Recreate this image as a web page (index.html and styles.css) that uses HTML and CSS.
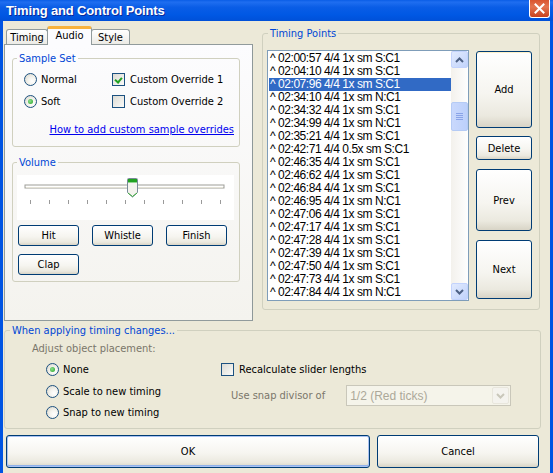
FILE: index.html
```html
<!DOCTYPE html>
<html lang="en">
<head>
    <meta charset="UTF-8">
    <title>Timing and Control Points</title>
    <link rel="stylesheet" href="styles.css">
</head>
<body>
    <div class="titlebar">
        <span class="title">Timing and Control Points</span>
        <span class="close">
            <svg width="11" height="11" viewBox="0 0 11 11"><path d="M1.5 1.5 L9.5 9.5 M9.5 1.5 L1.5 9.5" stroke="#fff" stroke-width="2" stroke-linecap="square"/></svg>
        </span>
    </div>
    <div class="client">
        <div class="top">
            <div class="tabs-col">
                <div class="tabstrip">
                    <div class="tab tab-timing">Timing</div>
                    <div class="tab tab-audio active">Audio</div>
                    <div class="tab tab-style">Style</div>
                </div>
                <div class="tabpanel">
                    <fieldset class="group sample">
                        <legend>Sample Set</legend>
                        <div class="sample-grid">
                            <label class="opt"><span class="radio"></span>Normal</label>
                            <label class="opt"><span class="check checked"></span>Custom Override 1</label>
                            <label class="opt"><span class="radio on"></span>Soft</label>
                            <label class="opt"><span class="check"></span>Custom Override 2</label>
                        </div>
                        <a class="link" href="#">How to add custom sample overrides</a>
                    </fieldset>
                    <fieldset class="group volume">
                        <legend>Volume</legend>
                        <div class="slider">
                            <svg width="217" height="45" viewBox="0 0 217 45">
                                <rect x="8" y="10" width="199" height="3" fill="#fff" stroke="#9d9d97" stroke-width="1"/>
                                <line x1="9" y1="12.5" x2="206" y2="12.5" stroke="#e4e2d6"/>
                                <g stroke="#9a9a9a">
                                    <line x1="13.5" y1="25" x2="13.5" y2="29"/>
                                    <line x1="32.5" y1="25" x2="32.5" y2="29"/>
                                    <line x1="51.5" y1="25" x2="51.5" y2="29"/>
                                    <line x1="70.5" y1="25" x2="70.5" y2="29"/>
                                    <line x1="89.5" y1="25" x2="89.5" y2="29"/>
                                    <line x1="108.5" y1="25" x2="108.5" y2="29"/>
                                    <line x1="127.5" y1="25" x2="127.5" y2="29"/>
                                    <line x1="146.5" y1="25" x2="146.5" y2="29"/>
                                    <line x1="165.5" y1="25" x2="165.5" y2="29"/>
                                    <line x1="184.5" y1="25" x2="184.5" y2="29"/>
                                    <line x1="203.5" y1="25" x2="203.5" y2="29"/>
                                </g>
                                <path d="M110.5 4.5 Q110.5 3.5 111.5 3.5 L119.5 3.5 Q120.5 3.5 120.5 4.5 L120.5 17.5 L115.5 22 L110.5 17.5 Z" fill="#f4f3ee" stroke="#7a8a99"/>
                                <rect x="111" y="4" width="9" height="3" fill="#21a121"/>
                                <line x1="111" y1="7.5" x2="120" y2="7.5" stroke="#8fd48f"/>
                                <path d="M111 18 L115.5 21.5 L120 18" fill="none" stroke="#3cae3c"/>
                            </svg>
                        </div>
                        <div class="vol-buttons">
                            <button class="btn">Hit</button>
                            <button class="btn">Whistle</button>
                            <button class="btn">Finish</button>
                            <button class="btn">Clap</button>
                        </div>
                    </fieldset>
                </div>
            </div>

            <fieldset class="group timing">
                <legend>Timing Points</legend>
                <div class="tp-body">
                    <div class="listbox">
                        <div class="rows">
                            <div class="row">^ 02:00:57 4/4 1x sm S:C1</div>
                            <div class="row">^ 02:04:10 4/4 1x sm S:C1</div>
                            <div class="row selected">^ 02:07:96 4/4 1x sm S:C1</div>
                            <div class="row">^ 02:34:10 4/4 1x sm N:C1</div>
                            <div class="row">^ 02:34:32 4/4 1x sm S:C1</div>
                            <div class="row">^ 02:34:99 4/4 1x sm N:C1</div>
                            <div class="row">^ 02:35:21 4/4 1x sm S:C1</div>
                            <div class="row">^ 02:42:71 4/4 0.5x sm S:C1</div>
                            <div class="row">^ 02:46:35 4/4 1x sm S:C1</div>
                            <div class="row">^ 02:46:62 4/4 1x sm S:C1</div>
                            <div class="row">^ 02:46:84 4/4 1x sm S:C1</div>
                            <div class="row">^ 02:46:95 4/4 1x sm N:C1</div>
                            <div class="row">^ 02:47:06 4/4 1x sm S:C1</div>
                            <div class="row">^ 02:47:17 4/4 1x sm S:C1</div>
                            <div class="row">^ 02:47:28 4/4 1x sm S:C1</div>
                            <div class="row">^ 02:47:39 4/4 1x sm S:C1</div>
                            <div class="row">^ 02:47:50 4/4 1x sm S:C1</div>
                            <div class="row">^ 02:47:73 4/4 1x sm S:C1</div>
                            <div class="row">^ 02:47:84 4/4 1x sm N:C1</div>
                        </div>
                        <div class="scrollbar">
                            <div class="sb-btn">
                                <svg width="9" height="6" viewBox="0 0 9 6"><path d="M1 5 L4.5 1.5 L8 5" fill="none" stroke="#4d6185" stroke-width="2"/></svg>
                            </div>
                            <div class="sb-track">
                                <div class="sb-thumb">
                                    <svg width="7" height="8" viewBox="0 0 7 8"><g stroke="#8aa4e8"><line x1="0" y1="0.5" x2="7" y2="0.5"/><line x1="0" y1="2.5" x2="7" y2="2.5"/><line x1="0" y1="4.5" x2="7" y2="4.5"/><line x1="0" y1="6.5" x2="7" y2="6.5"/></g></svg>
                                </div>
                            </div>
                            <div class="sb-btn">
                                <svg width="9" height="6" viewBox="0 0 9 6"><path d="M1 1 L4.5 4.5 L8 1" fill="none" stroke="#4d6185" stroke-width="2"/></svg>
                            </div>
                        </div>
                    </div>
                    <div class="side-buttons">
                        <button class="btn btn-add">Add</button>
                        <button class="btn btn-delete">Delete</button>
                        <button class="btn btn-prev">Prev</button>
                        <button class="btn btn-next">Next</button>
                    </div>
                </div>
            </fieldset>
        </div>

        <fieldset class="group apply">
            <legend>When applying timing changes...</legend>
            <div class="apply-body">
                <div class="apply-left">
                    <div class="muted adjust">Adjust object placement:</div>
                    <label class="opt row-opt"><span class="radio on"></span>None</label>
                    <label class="opt row-opt"><span class="radio"></span>Scale to new timing</label>
                    <label class="opt row-opt"><span class="radio"></span>Snap to new timing</label>
                </div>
                <div class="apply-right">
                    <label class="opt recalc"><span class="check"></span>Recalculate slider lengths</label>
                    <div class="snap-row">
                        <span class="muted">Use snap divisor of</span>
                        <div class="combo">
                            <span>1/2 (Red ticks)</span>
                            <span class="combo-btn">
                                <svg width="9" height="6" viewBox="0 0 9 6"><path d="M1 1 L4.5 4.5 L8 1" fill="none" stroke="#c9c7ba" stroke-width="2"/></svg>
                            </span>
                        </div>
                    </div>
                </div>
            </div>
        </fieldset>

        <div class="dialog-buttons">
            <button class="btn btn-ok">OK</button>
            <button class="btn btn-cancel">Cancel</button>
        </div>
    </div>
</body>
</html>
```

FILE: styles.css
```css
* {
    box-sizing: border-box;
}
body {
    margin: 0;
    width: 553px;
    height: 473px;
    overflow: hidden;
    background: #ece9d8;
    font-family: "DejaVu Sans Condensed", "DejaVu Sans", sans-serif;
    font-size: 11px;
    color: #000;
}
.titlebar {
    height: 21px;
    display: flex;
    justify-content: space-between;
    align-items: flex-start;
    padding: 0 3px 0 6px;
    background: linear-gradient(to bottom, #0a5de6 0%, #1f6ef0 10%, #0a5de6 35%, #0058e4 70%, #0050d8 100%);
}
.title {
    margin-top: 3px;
    color: #fff;
    font-family: "Liberation Sans", Arial, sans-serif;
    font-weight: bold;
    font-size: 13px;
    letter-spacing: -0.15px;
    text-shadow: 1px 1px #0a2a9a;
}
.close {
    width: 21px;
    height: 18px;
    display: flex;
    align-items: center;
    justify-content: center;
    border: 1px solid #fff;
    border-top: none;
    border-radius: 0 0 3px 3px;
    background: linear-gradient(to bottom, #d9542f, #e47450 40%, #c8421f);
}
.client {
    height: 452px;
    border-left: 3px solid #0054e3;
    border-right: 3px solid #0054e3;
}
.top {
    display: flex;
    align-items: flex-start;
    height: 300px;
}

/* tabs */
.tabs-col {
    margin-left: 1px;
    width: 249px;
}
.tabstrip {
    display: flex;
    align-items: flex-end;
    height: 18px;
    margin-top: 5px;
    padding-left: 2px;
}
.tab {
    height: 15px;
    border: 1px solid #919b9c;
    border-bottom: none;
    border-radius: 3px 3px 0 0;
    background: linear-gradient(#fff, #ecebe6);
    text-align: center;
    line-height: 15px;
}
.tab-timing {
    width: 42px;
    margin-right: -1px;
}
.tab-audio {
    width: 45px;
}
.tab-style {
    width: 39px;
    margin-left: -1px;
}
.tab.active {
    height: 19px;
    margin-bottom: -1px;
    position: relative;
    z-index: 1;
    background: #fcfcfe;
    border-top: 3px solid #f8b33d;
    line-height: 14px;
}
.tabpanel {
    height: 277px;
    border: 1px solid #919b9c;
    border-right-color: #8e9899;
    background: linear-gradient(#fcfcfe, #f4f3ee);
    padding: 7px 0 0 7px;
}

/* group boxes */
.group {
    margin: 0;
    padding: 0;
    min-width: 0;
    border: 1px solid #d0d0bf;
    border-radius: 3px;
}
.group legend {
    margin-left: 4px;
    padding: 0 2px;
    line-height: 13px;
    color: #0046d5;
}
.sample {
    width: 228px;
    height: 95px;
}
.sample-grid {
    display: grid;
    grid-template-columns: 88px auto;
    grid-auto-rows: 22px;
    padding: 3px 0 0 11px;
}
.opt {
    display: flex;
    align-items: center;
    gap: 4px;
}
.check + * {
    margin-left: 1px;
}
.radio {
    width: 13px;
    height: 13px;
    border-radius: 50%;
    border: 1px solid #1c5180;
    background: radial-gradient(circle at 65% 65%, #fff 0%, #f4f3ee 40%, #d6d3c6 100%);
    flex: none;
    display: flex;
    align-items: center;
    justify-content: center;
}
.radio.on::after {
    content: "";
    width: 5px;
    height: 5px;
    border-radius: 50%;
    background: radial-gradient(circle at 40% 40%, #8ee08e, #21a121);
}
.check {
    width: 13px;
    height: 13px;
    border: 1px solid #1c5180;
    background: linear-gradient(135deg, #dcdbd4, #fbfbf9);
    flex: none;
    margin-right: 1px;
}
.check.checked {
    background: linear-gradient(135deg, #dcdbd4, #fbfbf9) ;
    position: relative;
}
.check.checked::after {
    content: "";
    position: absolute;
    left: 2px;
    top: 1px;
    width: 5px;
    height: 3px;
    border-left: 2px solid #21a121;
    border-bottom: 2px solid #21a121;
    transform: translate(0, 2px) rotate(-50deg);
}
.link {
    display: block;
    margin: 11px 5px 0 0;
    text-align: right;
    line-height: 13px;
    color: #0000ee;
    text-decoration: underline;
}
.volume {
    margin-top: 9px;
    width: 228px;
    height: 126px;
}
.slider {
    margin: 6px 0 0 4px;
    width: 217px;
    height: 45px;
    background: #fff;
}
.slider svg {
    display: block;
}
.vol-buttons {
    display: grid;
    grid-template-columns: repeat(3, 61px);
    grid-auto-rows: 21px;
    column-gap: 13px;
    row-gap: 8px;
    margin: 5px 0 0 5px;
}

/* buttons */
.btn {
    font-family: inherit;
    font-size: 11px;
    color: #000;
    padding: 0;
    border: 1px solid #003c74;
    border-radius: 3px;
    background: linear-gradient(to bottom, #ffffff 0%, #f6f5f0 55%, #ebe9df 85%, #d8d4c6 100%);
}

/* timing points */
.timing {
    margin: 6px 0 0 9px;
    width: 278px;
    height: 283px;
}
.timing legend {
    margin-left: 5px;
}
.tp-body {
    display: flex;
    align-items: flex-start;
    gap: 7px;
    padding: 10px 0 0 4px;
}
.listbox {
    display: flex;
    width: 202px;
    height: 251px;
    border: 1px solid #7f9db9;
    background: #fff;
}
.rows {
    flex: 1;
    padding: 1px 0 0 1px;
}
.row {
    height: 13px;
    line-height: 13px;
    padding-left: 1px;
    font-family: "Liberation Sans", Arial, sans-serif;
    font-size: 12px;
    letter-spacing: -0.45px;
    white-space: nowrap;
}
.row.selected {
    background: #316ac5;
    color: #fff;
}
.scrollbar {
    width: 17px;
    display: flex;
    flex-direction: column;
    background: linear-gradient(to right, #f3f1ec, #fefefe);
}
.sb-btn {
    height: 17px;
    display: flex;
    align-items: center;
    justify-content: center;
    border: 1px solid #c3d3fd;
    border-radius: 2px;
    background: linear-gradient(135deg, #e1eafe, #c1d3fb);
}
.sb-track {
    flex: 1;
    padding-top: 34px;
}
.sb-thumb {
    height: 29px;
    display: flex;
    align-items: center;
    justify-content: center;
    border: 1px solid #b5cbf5;
    border-radius: 2px;
    background: linear-gradient(to right, #c9d8fc, #bcd0fb);
}
.side-buttons {
    display: flex;
    flex-direction: column;
    width: 56px;
    margin-top: 1px;
}
.side-buttons .btn {
    width: 56px;
}
.btn-add {
    height: 77px;
    box-shadow: inset 0 1px 0 #fff1c7;
}
.btn-delete {
    height: 24px;
    margin-top: 8px;
}
.btn-prev {
    height: 62px;
    margin-top: 9px;
}
.btn-next {
    height: 59px;
    margin-top: 9px;
}

/* bottom group */
.apply {
    margin: 3px 0 0 1px;
    width: 537px;
    height: 105px;
}
.apply legend {
    margin-left: 5px;
}
.apply-body {
    display: flex;
}
.apply-left {
    width: 216px;
}
.muted {
    color: #7a766a;
}
.adjust {
    margin-top: 5px;
    padding-left: 27px;
    line-height: 13px;
}
.row-opt {
    height: 21.5px;
    padding-left: 41px;
}
.row-opt:first-of-type {
    margin-top: 4px;
}
.apply-left .row-opt:nth-child(2) {
    margin-top: 4px;
}
.apply-right {
    padding-top: 22px;
}
.recalc {
    height: 21px;
}
.snap-row {
    display: flex;
    align-items: center;
    margin-top: 5px;
    padding-left: 10px;
    height: 21px;
}
.combo {
    margin-left: 21px;
    width: 165px;
    height: 21px;
    display: flex;
    align-items: center;
    justify-content: space-between;
    border: 1px solid #c9c7ba;
    background: #f5f4ea;
    color: #aca899;
    font-family: "Liberation Sans", Arial, sans-serif;
    font-size: 12px;
    padding: 0 1px 0 3px;
}
.combo-btn {
    width: 17px;
    height: 17px;
    display: flex;
    align-items: center;
    justify-content: center;
    border: 1px solid #e8e6dc;
    border-radius: 2px;
    background: #f4f3ee;
}

.dialog-buttons {
    display: flex;
    gap: 7px;
    margin: 6px 0 0 3px;
}
.btn-ok {
    width: 364px;
    height: 33px;
    box-shadow: inset 0 0 0 1px #a9c2f2, inset 0 -1px 0 1px #8fb1ea;
}
.btn-cancel {
    width: 162px;
    height: 33px;
}
```
